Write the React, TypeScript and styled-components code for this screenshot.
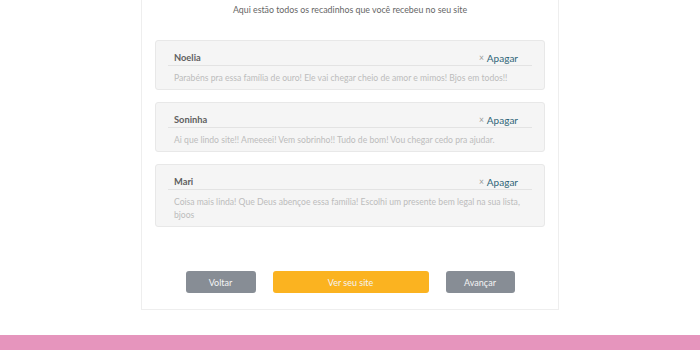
import React from "react";
import styled, { createGlobalStyle } from "styled-components";

const GlobalStyle = createGlobalStyle`
  html, body { margin: 0; padding: 0; background: #ffffff; }
  body { font-family: Lato, "Open Sans", "Liberation Sans", sans-serif; }
  * { box-sizing: border-box; }
`;

const Page = styled.div`
  display: flex;
  flex-direction: column;
  width: 700px;
  height: 350px;
  overflow: hidden;
`;

const Panel = styled.div`
  width: 418px;
  margin: 0 auto;
  border: 1px solid #eeeeee;
  border-top: none;
  background: #ffffff;
  padding: 3px 13px 16px;
  display: flex;
  flex-direction: column;
`;

const Subtitle = styled.p`
  margin: 0;
  font-size: 8.8px;
  line-height: 14px;
  color: #666666;
  text-align: center;
`;

const List = styled.div`
  margin-top: 23px;
  display: flex;
  flex-direction: column;
  gap: 12px;
`;

const Card = styled.div`
  background: #f5f5f5;
  border: 1px solid #e8e8e8;
  border-radius: 3px;
  padding: 0 12px;
`;

const CardHeader = styled.div`
  display: flex;
  justify-content: space-between;
  align-items: center;
  padding: 11px 14px 1px 6px;
  border-bottom: 1px solid #e3e3e3;
  line-height: 12px;
`;

const Name = styled.span`
  font-size: 9.3px;
  font-weight: 700;
  color: #606060;
`;

const Delete = styled.span`
  display: flex;
  align-items: center;
  gap: 3px;
  font-size: 10px;
  color: #2f6678;
`;

const Cross = styled.span`
  font-size: 8.5px;
  color: #9a9a9a;
`;

const Body = styled.p`
  margin: 0;
  padding: 6px 6px 4px;
  font-size: 8.6px;
  line-height: 13px;
  color: #bcbcbc;
`;

const Actions = styled.div`
  margin-top: 44px;
  display: flex;
  justify-content: center;
  gap: 17px;
`;

const Button = styled.button<{ $primary?: boolean; $w: number }>`
  width: ${(p) => p.$w}px;
  height: 22px;
  border: none;
  border-radius: 3px;
  background: ${(p) => (p.$primary ? "#fbb320" : "#878d95")};
  color: #f4f4f4;
  font-family: inherit;
  font-size: 9px;
  padding: 0;
`;

const Spacer = styled.div`
  flex: 1;
`;

const Footer = styled.div`
  height: 15px;
  background: #e695bd;
`;

const messages = [
  {
    name: "Noelia",
    text: "Parabéns pra essa família de ouro! Ele vai chegar cheio de amor e mimos! Bjos em todos!!",
  },
  {
    name: "Soninha",
    text: "Ai que lindo site!! Ameeeei! Vem sobrinho!! Tudo de bom! Vou chegar cedo pra ajudar.",
  },
  {
    name: "Mari",
    text: "Coisa mais linda! Que Deus abençoe essa família! Escolhi um presente bem legal na sua lista, bjoos",
  },
];

export default function App() {
  return (
    <>
      <GlobalStyle />
      <Page>
        <Panel>
          <Subtitle>Aqui estão todos os recadinhos que você recebeu no seu site</Subtitle>
          <List>
            {messages.map((m) => (
              <Card key={m.name}>
                <CardHeader>
                  <Name>{m.name}</Name>
                  <Delete>
                    <Cross>×</Cross>Apagar
                  </Delete>
                </CardHeader>
                <Body>{m.text}</Body>
              </Card>
            ))}
          </List>
          <Actions>
            <Button $w={70}>Voltar</Button>
            <Button $w={156} $primary>
              Ver seu site
            </Button>
            <Button $w={69}>Avançar</Button>
          </Actions>
        </Panel>
        <Spacer />
        <Footer />
      </Page>
    </>
  );
}
